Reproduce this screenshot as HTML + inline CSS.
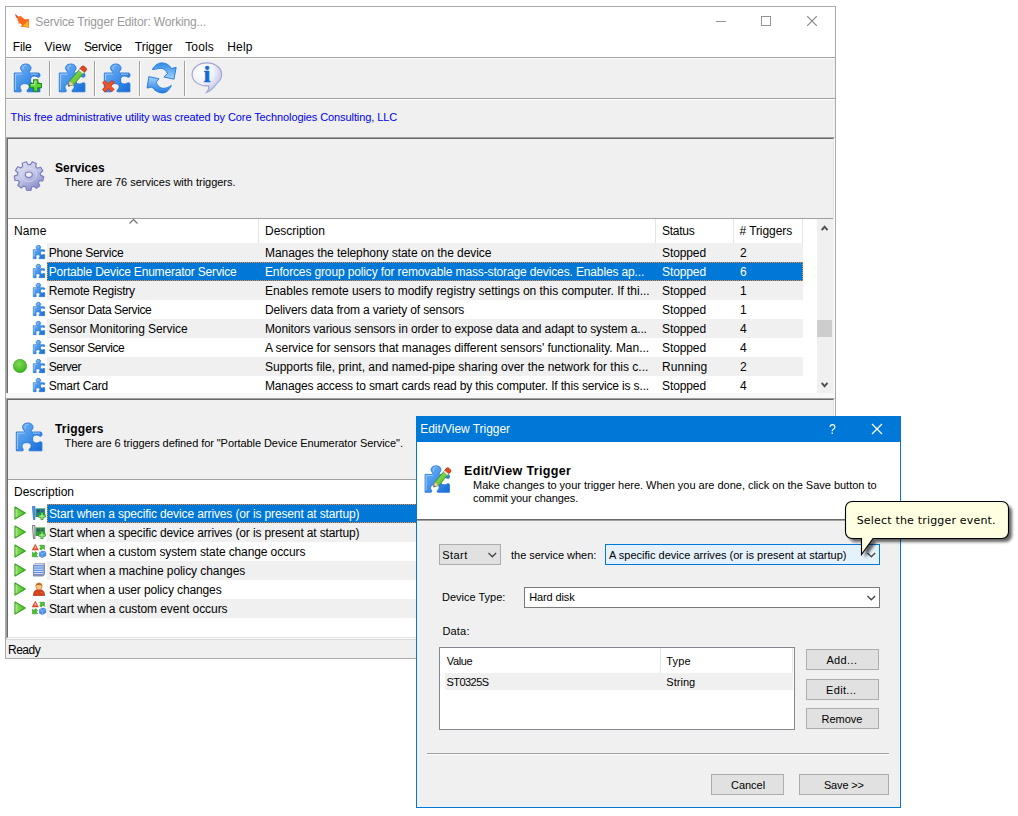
<!DOCTYPE html>
<html><head><meta charset="utf-8"><title>Service Trigger Editor</title>
<style>
html,body{margin:0;padding:0;background:#fff;}
body{width:1018px;height:816px;position:relative;overflow:hidden;font-family:"Liberation Sans",sans-serif;}
.a{position:absolute;}
.t{position:absolute;white-space:pre;line-height:16px;height:16px;}
.s{font-size:12px;letter-spacing:-0.15px;color:#000;}
.h{font-size:11px;color:#000;}
.b{font-size:12px;font-weight:bold;color:#000;}
.w{color:#fff;}
.v{font-family:"DejaVu Sans",sans-serif;font-size:11px;color:#000;}
.row{position:absolute;left:47px;width:756px;height:19px;background:#f0f0f0;}
.btn{letter-spacing:0.3px;position:absolute;box-sizing:border-box;border:1px solid #adadad;background:#e1e1e1;font-size:11px;text-align:center;line-height:20px;height:21px;color:#000;}
svg{position:absolute;overflow:visible;}
</style></head><body>
<svg width="0" height="0" style="left:0;top:0"><defs>
<linearGradient id="pg" x1="0" y1="0" x2="1" y2="1"><stop offset="0" stop-color="#7ab6f4"/><stop offset="0.5" stop-color="#4493ea"/><stop offset="1" stop-color="#156ad6"/></linearGradient>
<linearGradient id="rg" x1="0" y1="0" x2="0" y2="1"><stop offset="0" stop-color="#2f8ae8"/><stop offset="1" stop-color="#a6d4fb"/></linearGradient>
<linearGradient id="rg2" x1="0" y1="0" x2="0" y2="1"><stop offset="0" stop-color="#a6d4fb"/><stop offset="1" stop-color="#1f7ce2"/></linearGradient>
<radialGradient id="ig" cx="0.33" cy="0.28" r="0.8"><stop offset="0" stop-color="#ffffff"/><stop offset="0.5" stop-color="#f1f2fb"/><stop offset="1" stop-color="#b3b8de"/></radialGradient>
<linearGradient id="gg" x1="0" y1="0" x2="0.6" y2="1"><stop offset="0" stop-color="#e4e6f6"/><stop offset="0.55" stop-color="#c3c6e6"/><stop offset="1" stop-color="#8d92cc"/></linearGradient>
<radialGradient id="gb" cx="0.42" cy="0.35" r="0.75"><stop offset="0" stop-color="#7fd957"/><stop offset="0.65" stop-color="#4dc02a"/><stop offset="1" stop-color="#2f9a16"/></radialGradient>
<linearGradient id="tg" x1="0" y1="0" x2="1" y2="0"><stop offset="0" stop-color="#9be36f"/><stop offset="1" stop-color="#43b81f"/></linearGradient>
<linearGradient id="pc" x1="0" y1="0" x2="1" y2="1"><stop offset="0" stop-color="#a4ec6a"/><stop offset="1" stop-color="#3fae1c"/></linearGradient>
</defs></svg>

<div class="a" style="left:5px;top:6px;width:829px;height:651px;border:1px solid #aaa;background:#f0f0f0;"></div>
<div class="a" style="left:6px;top:7px;width:829px;height:50px;background:#fff;"></div>
<svg style="left:15px;top:14px" width="15" height="15" viewBox="0 0 15 15"><path d="M0 0 L3.200 2.800 L5.800 2 L9.500 5.200 L13.900 5.100 L14 13.700 L5.200 12.500 L7.100 10.900 L5.600 9.600 L3.300 9.600 L3.600 7.600 L2.300 6.100 L2.600 4.400 L1 3.500 Z" fill="#f9691c"/><path d="M0 0 L3 2.5 L2.5 3.5 Z" fill="#c0301a"/><path d="M13.4 6.8 L13.4 13.2 L7.6 12 Z" fill="#fdb515"/></svg>
<div class="t s" style="left:35.3px;top:14px;letter-spacing:-0.148px;color:#999;">Service Trigger Editor: Working...</div>
<svg style="left:700px;top:7px" width="135" height="30" viewBox="0 0 135 30"><g stroke="#949494" stroke-width="1" fill="none"><path d="M16 14.500 H26"/><rect x="61.500" y="9.500" width="9" height="9"/><path d="M107.200 9.200 L116.800 18.800 M116.800 9.200 L107.200 18.800" stroke="#858585" stroke-width="1.1"/></g></svg>
<div class="t s" style="left:12.8px;top:39px;letter-spacing:-0.136px;">File</div>
<div class="t s" style="left:44.6px;top:39px;letter-spacing:0.101px;">View</div>
<div class="t s" style="left:83.9px;top:39px;letter-spacing:-0.317px;">Service</div>
<div class="t s" style="left:134.8px;top:39px;letter-spacing:0.003px;">Trigger</div>
<div class="t s" style="left:185.2px;top:39px;letter-spacing:0.157px;">Tools</div>
<div class="t s" style="left:227.2px;top:39px;letter-spacing:0.178px;">Help</div>
<div class="a" style="left:6px;top:57px;width:829px;height:1px;background:#a0a0a0;"></div>
<div class="a" style="left:6px;top:58px;width:829px;height:1px;background:#fff;"></div>
<div class="a" style="left:6px;top:98px;width:829px;height:1px;background:#a0a0a0;"></div>
<div class="a" style="left:6px;top:99px;width:829px;height:1px;background:#fff;"></div>
<div class="a" style="left:49px;top:61px;width:1px;height:35px;background:#a0a0a0;"></div>
<div class="a" style="left:50px;top:61px;width:1px;height:35px;background:#fff;"></div>
<div class="a" style="left:94px;top:61px;width:1px;height:35px;background:#a0a0a0;"></div>
<div class="a" style="left:95px;top:61px;width:1px;height:35px;background:#fff;"></div>
<div class="a" style="left:139px;top:61px;width:1px;height:35px;background:#a0a0a0;"></div>
<div class="a" style="left:140px;top:61px;width:1px;height:35px;background:#fff;"></div>
<div class="a" style="left:184px;top:61px;width:1px;height:35px;background:#a0a0a0;"></div>
<div class="a" style="left:185px;top:61px;width:1px;height:35px;background:#fff;"></div>
<svg style="left:10px;top:60.5px" width="32.0" height="32.0" viewBox="0 0 32 32"><path d="M4.3 12 H11.5 C12.8 12 12.6 11 12 10.2 C9 7 11 3 15.8 3 C20.6 3 22.6 7 19.6 10.2 C19 11 19 12 20.3 12 H28.5 C30.5 12 30.5 16.5 28.5 16.3 C27 16.2 26.5 15 24.5 15 C21.5 15 20.5 17 20.5 19 C20.5 21 21.5 23 24.5 23 C26.5 23 27 21.8 28.5 21.8 C29.5 21.8 29.9 22.3 29.9 23 V30.8 H17.8 C16.5 30.8 16.8 29.5 17.8 28.5 C20.5 26 19 22.6 14.8 22.6 C10.5 22.6 9 26 10.8 28.5 C11.5 29.5 11.5 30.8 10.5 30.8 H4.3 Z" fill="url(#pg)" stroke="#2273d6" stroke-width="0.9" stroke-linejoin="round"/><path d="M5.4 29 V13.1 H12.6 M13.2 8.6 C12.4 6.2 14 4.2 16.2 4.2 M21 13.1 H28" fill="none" stroke="#b5d8fb" stroke-width="0.9" opacity="0.85"/><path transform="translate(-1,1)" d="M21 21.5 h3.6 v-3.6 h4.2 v3.6 h3.6 v4.2 h-3.6 v3.6 h-4.2 v-3.6 h-3.6 z" fill="#5fd63a" stroke="#178a17" stroke-width="1.1" stroke-linejoin="round"/><path transform="translate(-1,1)" d="M22.2 22.7 h3.6 v-3.6 h1.8" fill="none" stroke="#c9f5b0" stroke-width="0.9"/></svg>
<svg style="left:55px;top:60.5px" width="32.0" height="32.0" viewBox="0 0 32 32"><path d="M4.3 12 H11.5 C12.8 12 12.6 11 12 10.2 C9 7 11 3 15.8 3 C20.6 3 22.6 7 19.6 10.2 C19 11 19 12 20.3 12 H28.5 C30.5 12 30.5 16.5 28.5 16.3 C27 16.2 26.5 15 24.5 15 C21.5 15 20.5 17 20.5 19 C20.5 21 21.5 23 24.5 23 C26.5 23 27 21.8 28.5 21.8 C29.5 21.8 29.9 22.3 29.9 23 V30.8 H17.8 C16.5 30.8 16.8 29.5 17.8 28.5 C20.5 26 19 22.6 14.8 22.6 C10.5 22.6 9 26 10.8 28.5 C11.5 29.5 11.5 30.8 10.5 30.8 H4.3 Z" fill="url(#pg)" stroke="#2273d6" stroke-width="0.9" stroke-linejoin="round"/><path d="M5.4 29 V13.1 H12.6 M13.2 8.6 C12.4 6.2 14 4.2 16.2 4.2 M21 13.1 H28" fill="none" stroke="#b5d8fb" stroke-width="0.9" opacity="0.85"/><path d="M13.2 25.2 L14.6 20 L27.2 5.2 L31.4 8.8 L18.8 23.6 Z" fill="url(#pc)" stroke="#2c8a12" stroke-width="0.8" stroke-linejoin="round"/><path d="M24.9 7.9 L27.2 5.2 C28.4 3.8 32.6 7.4 31.4 8.8 L29.1 11.5 Z" fill="#e8431f" stroke="#b02a10" stroke-width="0.6"/><path d="M23.8 9.2 L24.9 7.9 L29.1 11.5 L28 12.8 Z" fill="#f4f4f4" stroke="#aaa" stroke-width="0.4"/><path d="M13.2 25.2 L14.6 20 L18.8 23.6 Z" fill="#f0d6a8" stroke="#a08050" stroke-width="0.5"/><path d="M13.2 25.2 L13.7 23.3 L15.2 24.6 Z" fill="#555"/></svg>
<svg style="left:100px;top:60.5px" width="32.0" height="32.0" viewBox="0 0 32 32"><path d="M4.3 12 H11.5 C12.8 12 12.6 11 12 10.2 C9 7 11 3 15.8 3 C20.6 3 22.6 7 19.6 10.2 C19 11 19 12 20.3 12 H28.5 C30.5 12 30.5 16.5 28.5 16.3 C27 16.2 26.5 15 24.5 15 C21.5 15 20.5 17 20.5 19 C20.5 21 21.5 23 24.5 23 C26.5 23 27 21.8 28.5 21.8 C29.5 21.8 29.9 22.3 29.9 23 V30.8 H17.8 C16.5 30.8 16.8 29.5 17.8 28.5 C20.5 26 19 22.6 14.8 22.6 C10.5 22.6 9 26 10.8 28.5 C11.5 29.5 11.5 30.8 10.5 30.8 H4.3 Z" fill="url(#pg)" stroke="#2273d6" stroke-width="0.9" stroke-linejoin="round"/><path d="M5.4 29 V13.1 H12.6 M13.2 8.6 C12.4 6.2 14 4.2 16.2 4.2 M21 13.1 H28" fill="none" stroke="#b5d8fb" stroke-width="0.9" opacity="0.85"/><path d="M2.6 22 L4.8 19.6 L8.4 23 L11.8 19.4 L14.2 21.6 L10.8 25.2 L14 28.4 L11.800 30.800 L8.4 27.600 L5.2 31 L2.6 28.600 L6 25.200 Z" fill="#f0552c" stroke="#c0300f" stroke-width="0.9" stroke-linejoin="round"/></svg>
<svg style="left:146px;top:62px" width="32" height="32" viewBox="0 0 32 32"><path d="M6.4 7.5 C9 2.5 13 0.9 16 0.9 C20 0.9 23.5 3 25.5 6.5 L30.2 5.3 L28 17.2 L17.9 15 L21.500 11.500 C20 8.200 17.500 6.300 15 6.300 C11.500 6.300 8.500 7.800 6.400 7.500 Z" fill="url(#rg)" stroke="#1f74d8" stroke-width="0.9" stroke-linejoin="round"/><path d="M2.8 14.6 L13 16.8 L10.200 20.200 C11.500 24 14.500 26.300 17.500 26.300 C20.500 26.300 23 25 25.400 23.400 C23 28.500 20 30.900 16.500 30.900 C12 30.900 8.500 28.500 6 25 L1.100 26.100 Z" fill="url(#rg2)" stroke="#1f74d8" stroke-width="0.9" stroke-linejoin="round"/></svg>
<svg style="left:191px;top:62px" width="32" height="32" viewBox="0 0 32 32"><path d="M15.9 0.9 C24.2 0.9 30.7 6 30.7 12.4 C30.7 16 28.8 18.8 26.4 20.8 C24.5 23.5 21.5 28.5 15.3 30.5 C17.5 28 18.2 25.5 17.5 23.8 C8 24.5 1.1 19 1.1 12.4 C1.1 6 7.6 0.9 15.9 0.9 Z" fill="url(#ig)" stroke="#a0a6d2" stroke-width="1.1"/><text x="15.900" y="19.900" font-family="Liberation Serif,serif" font-weight="bold" font-size="23.500" fill="#1668d8" stroke="#1668d8" stroke-width="0.700" text-anchor="middle">i</text></svg>
<div class="t h" style="left:10.6px;top:109px;letter-spacing:-0.095px;color:#0000f0;">This free administrative utility was created by Core Technologies Consulting, LLC</div>
<div class="a" style="left:6px;top:137px;width:829px;height:258px;box-sizing:border-box;border-left:1px solid #a0a0a0;border-top:1px solid #a0a0a0;border-right:1px solid #fff;border-bottom:1px solid #fff;"></div>
<div class="a" style="left:7px;top:138px;width:827px;height:256px;box-sizing:border-box;border-left:1px solid #696969;border-top:1px solid #696969;border-right:1px solid #e3e3e3;border-bottom:1px solid #e3e3e3;"></div>
<div class="a" style="left:6px;top:393px;width:829px;height:5px;background:#f8f8f8;"></div>
<svg style="left:13px;top:160px" width="32" height="32" viewBox="0 0 32 32"><path d="M9.2 3.2 L13.4 1.8 L15.1 4.7 L17.4 4.7 L19.2 1.9 L23.3 3.5 L22.7 6.7 L24.5 8.2 L27.7 7.2 L29.8 11.0 L27.2 13.1 L27.6 15.4 L30.7 16.6 L29.8 20.9 L26.5 20.9 L25.3 22.8 L26.8 25.7 L23.4 28.4 L20.8 26.3 L18.6 27.1 L17.9 30.3 L13.5 30.2 L12.9 27.0 L10.8 26.1 L8.1 28.1 L4.8 25.3 L6.4 22.4 L5.3 20.5 L2.0 20.3 L1.3 16.1 L4.5 14.9 L4.9 12.7 L2.4 10.5 L4.7 6.8 L7.9 7.9 L9.7 6.5 Z M12.3 14.8 a3.5 2.8 0 1 0 7 0 a3.5 2.8 0 1 0 -7 0 Z" fill="url(#gg)" fill-rule="evenodd" stroke="#7a7fbd" stroke-width="1.2" stroke-linejoin="round"/><ellipse cx="15.8" cy="14.8" rx="7.6" ry="6.8" fill="none" stroke="#dfe1f3" stroke-width="0.8" opacity="0.8"/></svg>
<div class="t b" style="left:55px;top:160px;letter-spacing:0.051px;">Services</div>
<div class="t h" style="left:64.5px;top:174px;letter-spacing:-0.022px;">There are 76 services with triggers.</div>
<div class="a" style="left:8px;top:218px;width:825px;height:1px;background:#a0a0a0;"></div>
<div class="a" style="left:8px;top:219px;width:826px;height:174px;background:#fff;"></div>
<div class="a" style="left:258px;top:219px;width:1px;height:24px;background:#e5e5e5;"></div>
<div class="a" style="left:655px;top:219px;width:1px;height:24px;background:#e5e5e5;"></div>
<div class="a" style="left:733px;top:219px;width:1px;height:24px;background:#e5e5e5;"></div>
<div class="a" style="left:802px;top:219px;width:1px;height:24px;background:#e5e5e5;"></div>
<svg style="left:129px;top:219px" width="9" height="5" viewBox="0 0 9 5"><path d="M0.5 4.500 L4.5 0.500 L8.5 4.500" fill="none" stroke="#6e6e6e" stroke-width="1.1"/></svg>
<div class="t s" style="left:14px;top:223px;letter-spacing:0.121px;">Name</div>
<div class="t s" style="left:265px;top:223px;letter-spacing:-0.021px;">Description</div>
<div class="t s" style="left:662px;top:223px;letter-spacing:-0.272px;">Status</div>
<div class="t s" style="left:739.5px;top:223px;letter-spacing:-0.076px;"># Triggers</div>
<div class="row" style="top:243px;"></div>
<svg style="left:33px;top:245px" width="12" height="14" viewBox="3.6 2.3 27 29.2" preserveAspectRatio="none"><path d="M4.3 12 H11.5 C12.8 12 12.6 11 12 10.2 C9 7 11 3 15.8 3 C20.6 3 22.6 7 19.6 10.2 C19 11 19 12 20.3 12 H28.5 C30.5 12 30.5 16.5 28.5 16.3 C27 16.2 26.5 15 24.5 15 C21.5 15 20.5 17 20.5 19 C20.5 21 21.5 23 24.5 23 C26.5 23 27 21.8 28.5 21.8 C29.5 21.8 29.9 22.3 29.9 23 V30.8 H17.8 C16.5 30.8 16.8 29.5 17.8 28.5 C20.5 26 19 22.6 14.8 22.6 C10.5 22.6 9 26 10.8 28.5 C11.5 29.5 11.5 30.8 10.5 30.8 H4.3 Z" fill="url(#pg)" stroke="#1f6fd4" stroke-width="1.3" stroke-linejoin="round"/><path d="M6.3 26 V14 H12 M14.2 8 C13.8 6.5 14.8 5.4 16.2 5.4" fill="none" stroke="#b9dbfb" stroke-width="1.5" opacity="0.8"/></svg>
<div class="t s" style="left:48.8px;top:245px;letter-spacing:-0.273px;">Phone Service</div>
<div class="t s" style="left:265px;top:245px;letter-spacing:-0.059px;">Manages the telephony state on the device</div>
<div class="t s" style="left:662px;top:245px;letter-spacing:-0.103px;">Stopped</div>
<div class="t s" style="left:740px;top:245px;">2</div>
<div class="row" style="top:262px;background:#0078d7;box-sizing:border-box;border:1px dotted #ff8728;"></div>
<svg style="left:33px;top:264px" width="12" height="14" viewBox="3.6 2.3 27 29.2" preserveAspectRatio="none"><path d="M4.3 12 H11.5 C12.8 12 12.6 11 12 10.2 C9 7 11 3 15.8 3 C20.6 3 22.6 7 19.6 10.2 C19 11 19 12 20.3 12 H28.5 C30.5 12 30.5 16.5 28.5 16.3 C27 16.2 26.5 15 24.5 15 C21.5 15 20.5 17 20.5 19 C20.5 21 21.5 23 24.5 23 C26.5 23 27 21.8 28.5 21.8 C29.5 21.8 29.9 22.3 29.9 23 V30.8 H17.8 C16.5 30.8 16.8 29.5 17.8 28.5 C20.5 26 19 22.6 14.8 22.6 C10.5 22.6 9 26 10.8 28.5 C11.5 29.5 11.5 30.8 10.5 30.8 H4.3 Z" fill="url(#pg)" stroke="#1f6fd4" stroke-width="1.3" stroke-linejoin="round"/><path d="M6.3 26 V14 H12 M14.2 8 C13.8 6.5 14.8 5.4 16.2 5.4" fill="none" stroke="#b9dbfb" stroke-width="1.5" opacity="0.8"/></svg>
<div class="t s w" style="left:48.8px;top:264px;letter-spacing:-0.188px;">Portable Device Enumerator Service</div>
<div class="t s w" style="left:265px;top:264px;letter-spacing:-0.136px;">Enforces group policy for removable mass-storage devices. Enables ap...</div>
<div class="t s w" style="left:662px;top:264px;letter-spacing:-0.103px;">Stopped</div>
<div class="t s w" style="left:740px;top:264px;">6</div>
<div class="row" style="top:281px;"></div>
<svg style="left:33px;top:283px" width="12" height="14" viewBox="3.6 2.3 27 29.2" preserveAspectRatio="none"><path d="M4.3 12 H11.5 C12.8 12 12.6 11 12 10.2 C9 7 11 3 15.8 3 C20.6 3 22.6 7 19.6 10.2 C19 11 19 12 20.3 12 H28.5 C30.5 12 30.5 16.5 28.5 16.3 C27 16.2 26.5 15 24.5 15 C21.5 15 20.5 17 20.5 19 C20.5 21 21.5 23 24.5 23 C26.5 23 27 21.8 28.5 21.8 C29.5 21.8 29.9 22.3 29.9 23 V30.8 H17.8 C16.5 30.8 16.8 29.5 17.8 28.5 C20.5 26 19 22.6 14.8 22.6 C10.5 22.6 9 26 10.8 28.5 C11.5 29.5 11.5 30.8 10.5 30.8 H4.3 Z" fill="url(#pg)" stroke="#1f6fd4" stroke-width="1.3" stroke-linejoin="round"/><path d="M6.3 26 V14 H12 M14.2 8 C13.8 6.5 14.8 5.4 16.2 5.4" fill="none" stroke="#b9dbfb" stroke-width="1.5" opacity="0.8"/></svg>
<div class="t s" style="left:48.8px;top:283px;letter-spacing:-0.218px;">Remote Registry</div>
<div class="t s" style="left:265px;top:283px;letter-spacing:-0.030px;">Enables remote users to modify registry settings on this computer. If thi...</div>
<div class="t s" style="left:662px;top:283px;letter-spacing:-0.103px;">Stopped</div>
<div class="t s" style="left:740px;top:283px;">1</div>
<svg style="left:33px;top:302px" width="12" height="14" viewBox="3.6 2.3 27 29.2" preserveAspectRatio="none"><path d="M4.3 12 H11.5 C12.8 12 12.6 11 12 10.2 C9 7 11 3 15.8 3 C20.6 3 22.6 7 19.6 10.2 C19 11 19 12 20.3 12 H28.5 C30.5 12 30.5 16.5 28.5 16.3 C27 16.2 26.5 15 24.5 15 C21.5 15 20.5 17 20.5 19 C20.5 21 21.5 23 24.5 23 C26.5 23 27 21.8 28.5 21.8 C29.5 21.8 29.9 22.3 29.9 23 V30.8 H17.8 C16.5 30.8 16.8 29.5 17.8 28.5 C20.5 26 19 22.6 14.8 22.6 C10.5 22.6 9 26 10.8 28.5 C11.5 29.5 11.5 30.8 10.5 30.8 H4.3 Z" fill="url(#pg)" stroke="#1f6fd4" stroke-width="1.3" stroke-linejoin="round"/><path d="M6.3 26 V14 H12 M14.2 8 C13.8 6.5 14.8 5.4 16.2 5.4" fill="none" stroke="#b9dbfb" stroke-width="1.5" opacity="0.8"/></svg>
<div class="t s" style="left:48.8px;top:302px;letter-spacing:-0.393px;">Sensor Data Service</div>
<div class="t s" style="left:265px;top:302px;letter-spacing:-0.142px;">Delivers data from a variety of sensors</div>
<div class="t s" style="left:662px;top:302px;letter-spacing:-0.103px;">Stopped</div>
<div class="t s" style="left:740px;top:302px;">1</div>
<div class="row" style="top:319px;"></div>
<svg style="left:33px;top:321px" width="12" height="14" viewBox="3.6 2.3 27 29.2" preserveAspectRatio="none"><path d="M4.3 12 H11.5 C12.8 12 12.6 11 12 10.2 C9 7 11 3 15.8 3 C20.6 3 22.6 7 19.6 10.2 C19 11 19 12 20.3 12 H28.5 C30.5 12 30.5 16.5 28.5 16.3 C27 16.2 26.5 15 24.5 15 C21.5 15 20.5 17 20.5 19 C20.5 21 21.5 23 24.5 23 C26.5 23 27 21.8 28.5 21.8 C29.5 21.8 29.9 22.3 29.9 23 V30.8 H17.8 C16.5 30.8 16.8 29.5 17.8 28.5 C20.5 26 19 22.6 14.8 22.6 C10.5 22.6 9 26 10.8 28.5 C11.5 29.5 11.5 30.8 10.5 30.8 H4.3 Z" fill="url(#pg)" stroke="#1f6fd4" stroke-width="1.3" stroke-linejoin="round"/><path d="M6.3 26 V14 H12 M14.2 8 C13.8 6.5 14.8 5.4 16.2 5.4" fill="none" stroke="#b9dbfb" stroke-width="1.5" opacity="0.8"/></svg>
<div class="t s" style="left:48.8px;top:321px;letter-spacing:-0.081px;">Sensor Monitoring Service</div>
<div class="t s" style="left:265px;top:321px;letter-spacing:-0.124px;">Monitors various sensors in order to expose data and adapt to system a...</div>
<div class="t s" style="left:662px;top:321px;letter-spacing:-0.103px;">Stopped</div>
<div class="t s" style="left:740px;top:321px;">4</div>
<svg style="left:33px;top:340px" width="12" height="14" viewBox="3.6 2.3 27 29.2" preserveAspectRatio="none"><path d="M4.3 12 H11.5 C12.8 12 12.6 11 12 10.2 C9 7 11 3 15.8 3 C20.6 3 22.6 7 19.6 10.2 C19 11 19 12 20.3 12 H28.5 C30.5 12 30.5 16.5 28.5 16.3 C27 16.2 26.5 15 24.5 15 C21.5 15 20.5 17 20.5 19 C20.5 21 21.5 23 24.5 23 C26.5 23 27 21.8 28.5 21.8 C29.5 21.8 29.9 22.3 29.9 23 V30.8 H17.8 C16.5 30.8 16.8 29.5 17.8 28.5 C20.5 26 19 22.6 14.8 22.6 C10.5 22.6 9 26 10.8 28.5 C11.5 29.5 11.5 30.8 10.5 30.8 H4.3 Z" fill="url(#pg)" stroke="#1f6fd4" stroke-width="1.3" stroke-linejoin="round"/><path d="M6.3 26 V14 H12 M14.2 8 C13.8 6.5 14.8 5.4 16.2 5.4" fill="none" stroke="#b9dbfb" stroke-width="1.5" opacity="0.8"/></svg>
<div class="t s" style="left:48.8px;top:340px;letter-spacing:-0.413px;">Sensor Service</div>
<div class="t s" style="left:265px;top:340px;letter-spacing:-0.045px;">A service for sensors that manages different sensors' functionality. Man...</div>
<div class="t s" style="left:662px;top:340px;letter-spacing:-0.103px;">Stopped</div>
<div class="t s" style="left:740px;top:340px;">4</div>
<div class="row" style="top:357px;"></div>
<svg style="left:33px;top:359px" width="12" height="14" viewBox="3.6 2.3 27 29.2" preserveAspectRatio="none"><path d="M4.3 12 H11.5 C12.8 12 12.6 11 12 10.2 C9 7 11 3 15.8 3 C20.6 3 22.6 7 19.6 10.2 C19 11 19 12 20.3 12 H28.5 C30.5 12 30.5 16.5 28.5 16.3 C27 16.2 26.5 15 24.5 15 C21.5 15 20.5 17 20.5 19 C20.5 21 21.5 23 24.5 23 C26.5 23 27 21.8 28.5 21.8 C29.5 21.8 29.9 22.3 29.9 23 V30.8 H17.8 C16.5 30.8 16.8 29.5 17.8 28.5 C20.5 26 19 22.6 14.8 22.6 C10.5 22.6 9 26 10.8 28.5 C11.5 29.5 11.5 30.8 10.5 30.8 H4.3 Z" fill="url(#pg)" stroke="#1f6fd4" stroke-width="1.3" stroke-linejoin="round"/><path d="M6.3 26 V14 H12 M14.2 8 C13.8 6.5 14.8 5.4 16.2 5.4" fill="none" stroke="#b9dbfb" stroke-width="1.5" opacity="0.8"/></svg>
<div class="t s" style="left:48.8px;top:359px;letter-spacing:-0.541px;">Server</div>
<div class="t s" style="left:265px;top:359px;letter-spacing:-0.003px;">Supports file, print, and named-pipe sharing over the network for this c...</div>
<div class="t s" style="left:662px;top:359px;letter-spacing:0.071px;">Running</div>
<div class="t s" style="left:740px;top:359px;">2</div>
<svg style="left:33px;top:378px" width="12" height="14" viewBox="3.6 2.3 27 29.2" preserveAspectRatio="none"><path d="M4.3 12 H11.5 C12.8 12 12.6 11 12 10.2 C9 7 11 3 15.8 3 C20.6 3 22.6 7 19.6 10.2 C19 11 19 12 20.3 12 H28.5 C30.5 12 30.5 16.5 28.5 16.3 C27 16.2 26.5 15 24.5 15 C21.5 15 20.5 17 20.5 19 C20.5 21 21.5 23 24.5 23 C26.5 23 27 21.8 28.5 21.8 C29.5 21.8 29.9 22.3 29.9 23 V30.8 H17.8 C16.5 30.8 16.8 29.5 17.8 28.5 C20.5 26 19 22.6 14.8 22.6 C10.5 22.6 9 26 10.8 28.5 C11.5 29.5 11.5 30.8 10.5 30.8 H4.3 Z" fill="url(#pg)" stroke="#1f6fd4" stroke-width="1.3" stroke-linejoin="round"/><path d="M6.3 26 V14 H12 M14.2 8 C13.8 6.5 14.8 5.4 16.2 5.4" fill="none" stroke="#b9dbfb" stroke-width="1.5" opacity="0.8"/></svg>
<div class="t s" style="left:48.8px;top:378px;letter-spacing:-0.226px;">Smart Card</div>
<div class="t s" style="left:265px;top:378px;letter-spacing:-0.151px;">Manages access to smart cards read by this computer. If this service is s...</div>
<div class="t s" style="left:662px;top:378px;letter-spacing:-0.103px;">Stopped</div>
<div class="t s" style="left:740px;top:378px;">4</div>
<svg style="left:13px;top:359px" width="14" height="14" viewBox="0 0 14 14"><circle cx="7" cy="7" r="6.700" fill="url(#gb)" stroke="#3aa51c" stroke-width="0.600"/></svg>
<div class="a" style="left:817px;top:219px;width:17px;height:174px;background:#f0f0f0;"></div>
<div class="a" style="left:817px;top:320px;width:15px;height:17px;background:#cdcdcd;"></div>
<svg style="left:820px;top:224px" width="9" height="8" viewBox="0 0 9 8"><path d="M1.700 6.100 L4.600 2.700 L7.500 6.100" fill="none" stroke="#505050" stroke-width="2"/></svg>
<svg style="left:820px;top:381px" width="9" height="8" viewBox="0 0 9 8"><path d="M1.700 1.900 L4.600 5.300 L7.500 1.900" fill="none" stroke="#505050" stroke-width="2"/></svg>
<div class="a" style="left:6px;top:398px;width:829px;height:241px;box-sizing:border-box;border-left:1px solid #a0a0a0;border-top:1px solid #a0a0a0;border-right:1px solid #fff;border-bottom:1px solid #fff;"></div>
<div class="a" style="left:7px;top:399px;width:827px;height:239px;box-sizing:border-box;border-left:1px solid #696969;border-top:1px solid #696969;border-right:1px solid #e3e3e3;border-bottom:1px solid #e3e3e3;"></div>
<svg style="left:12px;top:420px" width="32.0" height="32.0" viewBox="0 0 32 32"><path d="M4.3 12 H11.5 C12.8 12 12.6 11 12 10.2 C9 7 11 3 15.8 3 C20.6 3 22.6 7 19.6 10.2 C19 11 19 12 20.3 12 H28.5 C30.5 12 30.5 16.5 28.5 16.3 C27 16.2 26.5 15 24.5 15 C21.5 15 20.5 17 20.5 19 C20.5 21 21.5 23 24.5 23 C26.5 23 27 21.8 28.5 21.8 C29.5 21.8 29.9 22.3 29.9 23 V30.8 H17.8 C16.5 30.8 16.8 29.5 17.8 28.5 C20.5 26 19 22.6 14.8 22.6 C10.5 22.6 9 26 10.8 28.5 C11.5 29.5 11.5 30.8 10.5 30.8 H4.3 Z" fill="url(#pg)" stroke="#2273d6" stroke-width="0.9" stroke-linejoin="round"/><path d="M5.4 29 V13.1 H12.6 M13.2 8.6 C12.4 6.2 14 4.2 16.2 4.2 M21 13.1 H28" fill="none" stroke="#b5d8fb" stroke-width="0.9" opacity="0.85"/></svg>
<div class="t b" style="left:55px;top:421px;letter-spacing:0.168px;">Triggers</div>
<div class="t h" style="left:64.5px;top:435px;letter-spacing:-0.073px;">There are 6 triggers defined for "Portable Device Enumerator Service".</div>
<div class="a" style="left:8px;top:479px;width:826px;height:1px;background:#a0a0a0;"></div>
<div class="a" style="left:8px;top:480px;width:826px;height:157px;background:#fff;"></div>
<div class="t s" style="left:14px;top:484px;letter-spacing:-0.003px;">Description</div>
<div class="row" style="top:504px;width:786px;background:#0078d7;box-sizing:border-box;border:1px dotted #ff8728;"></div>
<svg style="left:14px;top:506px" width="12" height="14" viewBox="0 0 12 14"><path d="M1 1 L11.300 7 L1 13 Z" fill="url(#tg)" stroke="#33a31d" stroke-width="1.2" stroke-linejoin="round"/><path d="M2.100 2.800 V11.200" stroke="#c5f2a8" stroke-width="0.7"/></svg>
<div class="t s w" style="left:48.9px;top:506px;letter-spacing:-0.132px;">Start when a specific device arrives (or is present at startup)</div>
<svg style="left:32.3px;top:506px" width="13.6" height="14" viewBox="0 0 14 14" preserveAspectRatio="none"><path d="M0.5 0.5 H3 V13.5 H1.5 Z" fill="#5b9be0" stroke="#2f6fc0" stroke-width="0.8"/><rect x="3.6" y="2.4" width="9.9" height="8.6" fill="#1f8f7a"/><rect x="5" y="3.6" width="3" height="3" fill="#3a3a8a" opacity="0.75"/><rect x="9" y="3.6" width="3" height="2.4" fill="#5a3a8a" opacity="0.6"/><path d="M6.8 9 h2.4 v-2.4 h2.2 v2.4 h2.4 v2.2 h-2.4 v2.4 h-2.2 v-2.4 h-2.4 z" fill="#a5ee84" stroke="#1f8f1f" stroke-width="0.800"/></svg>
<div class="row" style="top:523px;width:786px;"></div>
<svg style="left:14px;top:525px" width="12" height="14" viewBox="0 0 12 14"><path d="M1 1 L11.300 7 L1 13 Z" fill="url(#tg)" stroke="#33a31d" stroke-width="1.2" stroke-linejoin="round"/><path d="M2.100 2.800 V11.200" stroke="#c5f2a8" stroke-width="0.7"/></svg>
<div class="t s" style="left:48.9px;top:525px;letter-spacing:-0.132px;">Start when a specific device arrives (or is present at startup)</div>
<svg style="left:32.3px;top:525px" width="13.6" height="14" viewBox="0 0 14 14" preserveAspectRatio="none"><path d="M0.5 0.5 H3 V13.5 H1.5 Z" fill="#e8e8e8" stroke="#555" stroke-width="0.8"/><rect x="3.6" y="2.4" width="9.9" height="8.6" fill="#2fa03a"/><rect x="5" y="3.6" width="3" height="3" fill="#3a3a8a" opacity="0.75"/><rect x="9" y="3.6" width="3" height="2.4" fill="#5a3a8a" opacity="0.6"/><path d="M6.8 9 h2.4 v-2.4 h2.2 v2.4 h2.4 v2.2 h-2.4 v2.4 h-2.2 v-2.4 h-2.4 z" fill="#a5ee84" stroke="#1f8f1f" stroke-width="0.800"/></svg>
<svg style="left:14px;top:544px" width="12" height="14" viewBox="0 0 12 14"><path d="M1 1 L11.300 7 L1 13 Z" fill="url(#tg)" stroke="#33a31d" stroke-width="1.2" stroke-linejoin="round"/><path d="M2.100 2.800 V11.200" stroke="#c5f2a8" stroke-width="0.7"/></svg>
<div class="t s" style="left:48.9px;top:544px;letter-spacing:-0.110px;">Start when a custom system state change occurs</div>
<svg style="left:31.8px;top:544px" width="14" height="14" viewBox="0 0 14 14"><path d="M3.3 0.3 L6.4 6 H0.2 Z" fill="#f0502a" stroke="#c8301a" stroke-width="0.5" stroke-linejoin="round"/><path d="M3.3 1.6 L4.6 4.4 H2.2 Z" fill="#f9b09a"/><path d="M7.6 1.2 H12.4 V5.6 L10.8 4 L9.2 6.2 L7.6 4.6 L9 3 Z" fill="#4cc030" stroke="#238a18" stroke-width="0.5"/><path d="M0.4 8 L2 9.6 L3.6 7.6 L5.6 9.4 L4.2 11 L5.8 12.8 H0.4 Z" fill="#4cc030" stroke="#238a18" stroke-width="0.5"/><path d="M7.4 8.4 L11 7 L13.8 8 V11.8 L10.2 13.6 L7.4 12.2 Z" fill="#4a8fe8" stroke="#1f5fc0" stroke-width="0.5"/><path d="M7.4 8.4 L10.2 9.6 L13.8 8 M10.2 9.600 V13.600" fill="none" stroke="#a8cdf8" stroke-width="0.6"/></svg>
<div class="row" style="top:561px;width:786px;"></div>
<svg style="left:14px;top:563px" width="12" height="14" viewBox="0 0 12 14"><path d="M1 1 L11.300 7 L1 13 Z" fill="url(#tg)" stroke="#33a31d" stroke-width="1.2" stroke-linejoin="round"/><path d="M2.100 2.800 V11.200" stroke="#c5f2a8" stroke-width="0.7"/></svg>
<div class="t s" style="left:48.9px;top:563px;letter-spacing:-0.071px;">Start when a machine policy changes</div>
<svg style="left:33px;top:563px" width="12" height="14" viewBox="0 0 13 15" preserveAspectRatio="none"><path d="M0.5 2.2 L2.2 0.5 H12.5 V12.2 L10.8 14 H0.5 Z" fill="#9aa2c8" stroke="#5f68a0" stroke-width="0.7"/><path d="M0.5 2.2 L2.2 0.5 H12.5 L10.8 2.2 Z" fill="#d5d8ea"/><rect x="0.8" y="2.4" width="10" height="11.4" fill="#5b8fe0"/><path d="M1 4.2 H10.8 M1 6.6 H10.8 M1 9 H10.8 M1 11.400 H10.800" stroke="#e6effc" stroke-width="1"/><rect x="0.8" y="11.8" width="10" height="2" fill="#8c8fb0"/></svg>
<svg style="left:14px;top:582px" width="12" height="14" viewBox="0 0 12 14"><path d="M1 1 L11.300 7 L1 13 Z" fill="url(#tg)" stroke="#33a31d" stroke-width="1.2" stroke-linejoin="round"/><path d="M2.100 2.800 V11.200" stroke="#c5f2a8" stroke-width="0.7"/></svg>
<div class="t s" style="left:48.9px;top:582px;letter-spacing:-0.130px;">Start when a user policy changes</div>
<svg style="left:33px;top:582px" width="12" height="14" viewBox="0 0 13 14" preserveAspectRatio="none"><path d="M0.5 13.500 C0.5 8 4 7.5 6.5 7.5 C9 7.5 12.500 8 12.500 13.500 Z" fill="#d8431f" stroke="#a82a12" stroke-width="0.7"/><circle cx="6.500" cy="4.300" r="3.500" fill="#f6c080" stroke="#c07a30" stroke-width="0.6"/><path d="M3 4 C3 0 10 0 10 4 C9 2.500 4 2.500 3 4 Z" fill="#c06a20"/><path d="M4 10.500 l1 1 M8.500 11 l1 -1" stroke="#f0a030" stroke-width="0.8"/></svg>
<div class="row" style="top:599px;width:786px;"></div>
<svg style="left:14px;top:601px" width="12" height="14" viewBox="0 0 12 14"><path d="M1 1 L11.300 7 L1 13 Z" fill="url(#tg)" stroke="#33a31d" stroke-width="1.2" stroke-linejoin="round"/><path d="M2.100 2.800 V11.200" stroke="#c5f2a8" stroke-width="0.7"/></svg>
<div class="t s" style="left:48.9px;top:601px;letter-spacing:-0.067px;">Start when a custom event occurs</div>
<svg style="left:31.8px;top:601px" width="14" height="14" viewBox="0 0 14 14"><path d="M3.3 0.3 L6.4 6 H0.2 Z" fill="#f0502a" stroke="#c8301a" stroke-width="0.5" stroke-linejoin="round"/><path d="M3.3 1.6 L4.6 4.4 H2.2 Z" fill="#f9b09a"/><path d="M7.6 1.2 H12.4 V5.6 L10.8 4 L9.2 6.2 L7.6 4.6 L9 3 Z" fill="#4cc030" stroke="#238a18" stroke-width="0.5"/><path d="M0.4 8 L2 9.6 L3.6 7.6 L5.6 9.4 L4.2 11 L5.8 12.8 H0.4 Z" fill="#4cc030" stroke="#238a18" stroke-width="0.5"/><path d="M7.4 8.4 L11 7 L13.8 8 V11.8 L10.2 13.6 L7.4 12.2 Z" fill="#4a8fe8" stroke="#1f5fc0" stroke-width="0.5"/><path d="M7.4 8.4 L10.2 9.6 L13.8 8 M10.2 9.600 V13.600" fill="none" stroke="#a8cdf8" stroke-width="0.6"/></svg>
<div class="a" style="left:6px;top:639px;width:829px;height:1px;background:#d7d7d7;"></div>
<div class="t s" style="left:8px;top:642px;letter-spacing:-0.497px;">Ready</div>
<div class="a" style="left:416px;top:416px;width:483px;height:390px;border:1px solid #0078d7;background:#f0f0f0;"></div>
<div class="a" style="left:416px;top:416px;width:485px;height:26px;background:#0078d7;"></div>
<div class="t s w" style="left:420.2px;top:421px;letter-spacing:-0.035px;">Edit/View Trigger</div>
<div class="t s w" style="left:829px;top:421px;font-size:14px;transform:scaleX(0.88);transform-origin:0 0;">?</div>
<svg style="left:872px;top:424px" width="10" height="10" viewBox="0 0 10 10"><path d="M0 0 L10 10 M10 0 L0 10" stroke="#fff" stroke-width="1.3" fill="none"/></svg>
<div class="a" style="left:417px;top:442px;width:483px;height:77px;background:#fff;"></div>
<div class="a" style="left:417px;top:519px;width:483px;height:1px;background:#696969;"></div>
<div class="a" style="left:417px;top:520px;width:483px;height:1px;background:#a0a0a0;"></div>
<svg style="left:420.9px;top:463.4px" width="30.4" height="30.4" viewBox="0 0 32 32"><path d="M4.3 12 H11.5 C12.8 12 12.6 11 12 10.2 C9 7 11 3 15.8 3 C20.6 3 22.6 7 19.6 10.2 C19 11 19 12 20.3 12 H28.5 C30.5 12 30.5 16.5 28.5 16.3 C27 16.2 26.5 15 24.5 15 C21.5 15 20.5 17 20.5 19 C20.5 21 21.5 23 24.5 23 C26.5 23 27 21.8 28.5 21.8 C29.5 21.8 29.9 22.3 29.9 23 V30.8 H17.8 C16.5 30.8 16.8 29.5 17.8 28.5 C20.5 26 19 22.6 14.8 22.6 C10.5 22.6 9 26 10.8 28.5 C11.5 29.5 11.5 30.8 10.5 30.8 H4.3 Z" fill="url(#pg)" stroke="#2273d6" stroke-width="0.9" stroke-linejoin="round"/><path d="M5.4 29 V13.1 H12.6 M13.2 8.6 C12.4 6.2 14 4.2 16.2 4.2 M21 13.1 H28" fill="none" stroke="#b5d8fb" stroke-width="0.9" opacity="0.85"/><path d="M13.2 25.2 L14.6 20 L27.2 5.2 L31.4 8.8 L18.8 23.6 Z" fill="url(#pc)" stroke="#2c8a12" stroke-width="0.8" stroke-linejoin="round"/><path d="M24.9 7.9 L27.2 5.2 C28.4 3.8 32.6 7.4 31.4 8.8 L29.1 11.5 Z" fill="#e8431f" stroke="#b02a10" stroke-width="0.6"/><path d="M23.8 9.2 L24.9 7.9 L29.1 11.5 L28 12.8 Z" fill="#f4f4f4" stroke="#aaa" stroke-width="0.4"/><path d="M13.2 25.2 L14.6 20 L18.8 23.6 Z" fill="#f0d6a8" stroke="#a08050" stroke-width="0.5"/><path d="M13.2 25.2 L13.7 23.3 L15.2 24.6 Z" fill="#555"/></svg>
<div class="t b" style="left:464px;top:463px;letter-spacing:0.360px;font-size:12.5px;">Edit/View Trigger</div>
<div class="t h" style="left:473px;top:477px;letter-spacing:-0.015px;">Make changes to your trigger here. When you are done, click on the Save button to</div>
<div class="t h" style="left:473px;top:490px;letter-spacing:-0.125px;">commit your changes.</div>
<div class="a" style="left:439px;top:544px;width:62px;height:21px;box-sizing:border-box;border:1px solid #adadad;background:#e1e1e1;"></div>
<div class="t h" style="left:442.3px;top:547px;letter-spacing:0.433px;">Start</div>
<svg style="left:488px;top:552px" width="9" height="5" viewBox="0 0 9 5"><path d="M0.500 0.900 L4.300 4.700 L8.100 0.900" fill="none" stroke="#484848" stroke-width="1.35"/></svg>
<div class="t h" style="left:511px;top:547px;letter-spacing:-0.018px;">the service when:</div>
<div class="a" style="left:605px;top:544px;width:275px;height:21px;box-sizing:border-box;border:1px solid #0078d7;background:#e5f1fb;"></div>
<div class="t h" style="left:609px;top:547px;letter-spacing:0.005px;">A specific device arrives (or is present at startup)</div>
<svg style="left:867px;top:552px" width="9" height="5" viewBox="0 0 9 5"><path d="M0.500 0.900 L4.300 4.700 L8.100 0.900" fill="none" stroke="#484848" stroke-width="1.35"/></svg>
<div class="t h" style="left:442px;top:589px;letter-spacing:0.001px;">Device Type:</div>
<div class="a" style="left:524px;top:587px;width:356px;height:21px;box-sizing:border-box;border:1px solid #7a7a7a;background:#fff;"></div>
<div class="t h" style="left:529.3px;top:589px;letter-spacing:-0.141px;">Hard disk</div>
<svg style="left:867px;top:595px" width="9" height="5" viewBox="0 0 9 5"><path d="M0.500 0.900 L4.300 4.700 L8.100 0.900" fill="none" stroke="#484848" stroke-width="1.35"/></svg>
<div class="t h" style="left:442.4px;top:623px;letter-spacing:0.201px;">Data:</div>
<div class="a" style="left:439px;top:647px;width:356px;height:83px;box-sizing:border-box;border:1px solid #828790;background:#fff;"></div>
<div class="a" style="left:660px;top:648px;width:1px;height:25px;background:#e5e5e5;"></div>
<div class="a" style="left:792px;top:648px;width:1px;height:25px;background:#e5e5e5;"></div>
<div class="t h" style="left:446.8px;top:653px;letter-spacing:-0.346px;">Value</div>
<div class="t h" style="left:666.3px;top:653px;letter-spacing:0.160px;">Type</div>
<div class="a" style="left:445px;top:673px;width:348px;height:17px;background:#f0f0f0;"></div>
<div class="t h" style="left:446.6px;top:674px;letter-spacing:-0.568px;">ST0325S</div>
<div class="t h" style="left:666.3px;top:674px;letter-spacing:0.042px;">String</div>
<div class="btn" style="left:806px;top:649px;width:73px;"></div>
<div class="t h" style="left:826.4px;top:651.5px;letter-spacing:0.375px;">Add...</div>
<div class="btn" style="left:806px;top:679px;width:73px;"></div>
<div class="t h" style="left:826.0px;top:681.5px;letter-spacing:0.339px;">Edit...</div>
<div class="btn" style="left:806px;top:708px;width:73px;"></div>
<div class="t h" style="left:821.5px;top:710.5px;letter-spacing:-0.028px;">Remove</div>
<div class="a" style="left:427px;top:753px;width:462px;height:1px;background:#a0a0a0;"></div>
<div class="a" style="left:427px;top:754px;width:462px;height:1px;background:#fff;"></div>
<div class="btn" style="left:711px;top:774px;width:73px;"></div>
<div class="t h" style="left:731.0px;top:776.5px;letter-spacing:-0.025px;">Cancel</div>
<div class="btn" style="left:799px;top:774px;width:90px;"></div>
<div class="t h" style="left:823.9px;top:776.5px;letter-spacing:-0.155px;">Save &gt;&gt;</div>
<svg style="left:840px;top:496px" width="178" height="70" viewBox="0 0 178 70"><defs><filter id="tsh" x="-10%" y="-20%" width="125%" height="150%"><feGaussianBlur stdDeviation="1.6"/></filter></defs><path d="M12 5.500 H162 a6.500 6.500 0 0 1 6.500 6.500 V36 a6.500 6.500 0 0 1 -6.500 6.500 H33 L21.500 58.500 V42.500 H12 a6.500 6.500 0 0 1 -6.500 -6.500 V12 a6.500 6.500 0 0 1 6.500 -6.500 Z" fill="#000" opacity="0.6" transform="translate(3.5,3.5)" filter="url(#tsh)"/><path d="M12 5.500 H162 a6.500 6.500 0 0 1 6.500 6.500 V36 a6.500 6.500 0 0 1 -6.500 6.500 H33 L21.500 58.500 V42.500 H12 a6.500 6.500 0 0 1 -6.500 -6.500 V12 a6.500 6.500 0 0 1 6.500 -6.500 Z" fill="#ffffe1" stroke="#000" stroke-width="1.1"/></svg>
<div class="t v" style="left:856.7px;top:513px;letter-spacing:0.186px;">Select the trigger event.</div>
</body></html>
